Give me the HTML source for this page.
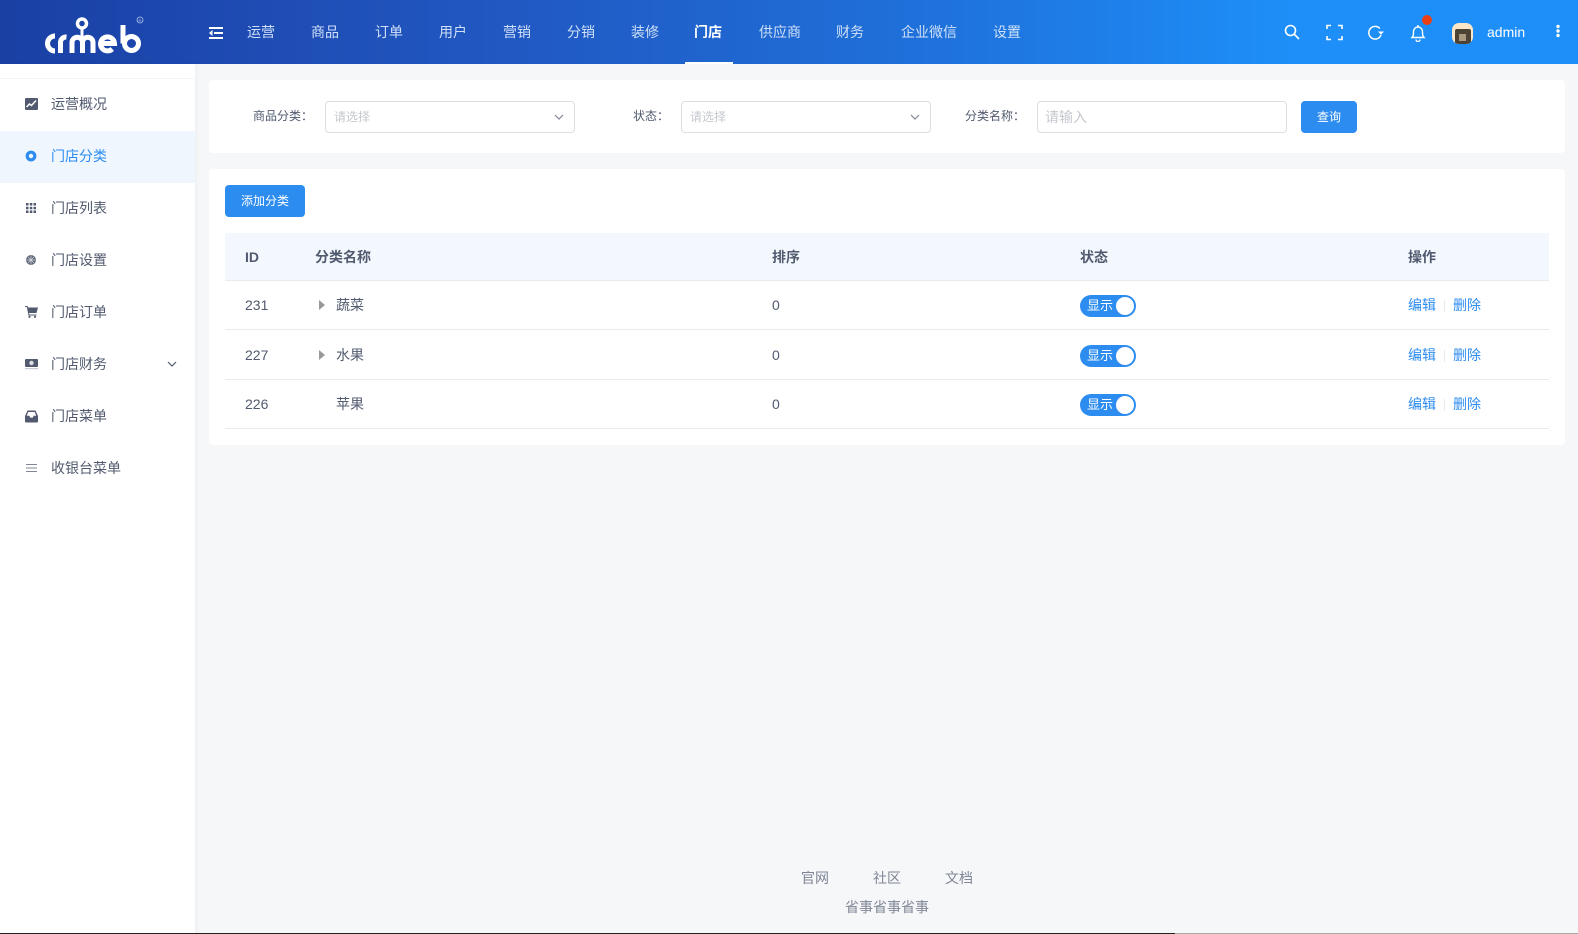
<!DOCTYPE html>
<html lang="zh-CN">
<head>
<meta charset="utf-8">
<title>门店分类</title>
<style>
html,body{margin:0;padding:0;width:1578px;height:934px;overflow:hidden;background:#f5f7f9;font-family:"Liberation Sans","Noto Sans CJK SC",sans-serif;font-size:14px;color:#515a6e}
.a{position:absolute;white-space:nowrap}
#hd{position:absolute;left:0;top:0;width:1578px;height:64px;background:linear-gradient(90deg,#1a40a4 0%,#2156c0 30%,#1f72dc 60%,#1e8ff8 82%,#1e8ff8 100%)}
.nav{position:absolute;top:18px;line-height:28px;color:#cfe0f8;font-size:14px}
#sb{position:absolute;left:0;top:64px;width:195px;height:870px;background:#fff;box-shadow:2px 0 4px rgba(0,0,0,.03)}
.mi{position:absolute;left:51px;line-height:20px;font-size:14px;color:#515a6e}
.ic{position:absolute;left:25px}
.card{position:absolute;background:#fff;border-radius:4px}
.lb{position:absolute;font-size:12px;line-height:20px;color:#515a6e}
.inp{position:absolute;top:101px;height:30px;width:248px;border:1px solid #dcdee2;border-radius:4px;background:#fff}
.ph{position:absolute;left:8px;top:5px;line-height:20px;font-size:12px;color:#c5c8ce}
.btn{position:absolute;background:#2d8cf0;color:#fff;border-radius:4px;text-align:center;font-size:12px}
.th{position:absolute;top:247px;line-height:20px;font-weight:700;font-size:14px;color:#515a6e}
.line{position:absolute;left:225px;width:1324px;height:1px;background:#e8eaec}
.td{position:absolute;line-height:20px;font-size:14px;color:#515a6e}
.sw{position:absolute;left:1080px;width:56px;height:22px;border-radius:11px;background:#2d8cf0}
.sw b{position:absolute;left:36px;top:2px;width:18px;height:18px;border-radius:50%;background:#fff}
.sw span{position:absolute;left:7px;top:1px;line-height:20px;font-size:13px;color:#fff}
.lk{position:absolute;line-height:20px;font-size:14px;color:#2d8cf0}
.dv{position:absolute;left:1444px;width:1px;height:12px;background:#e8eaec}
.tri{position:absolute;left:319px;width:0;height:0;border-left:6px solid #999;border-top:5px solid transparent;border-bottom:5px solid transparent}
.ft{position:absolute;line-height:20px;font-size:14px;color:#808695}
</style>
</head>
<body>
<div id="hd"></div>
<svg class="a" style="left:40px;top:12px" width="115" height="46" viewBox="40 12 115 46" fill="none" stroke="#fff" stroke-width="5">
<path d="M55 36A7.500 7.500 0 0 0 55 51"/>
<path d="M60.500 53V42.500a5.500 5.500 0 0 1 6-5.500"/>
<path d="M72 53V42.500a5.200 5.200 0 0 1 10.500 0V53M82.500 42.500a5.200 5.200 0 0 1 10.500 0V53"/>
<circle cx="82" cy="23.500" r="4.500" stroke-width="3.500"/>
<path d="M82 28v10" stroke-width="3"/>
<path d="M100.500 43.500h14a7 7 0 1 0-2.200 5.500"/>
<circle cx="131.500" cy="43.500" r="7"/>
<path d="M123 25v18.500"/>
<circle cx="140" cy="20" r="3" stroke="#b9c8ea" stroke-width=".8"/>
<text x="138.500" y="22" font-size="4" fill="#b9c8ea" stroke="none" font-family="Liberation Sans">R</text>
</svg>
<svg class="a" style="left:209px;top:26px" width="15" height="14" viewBox="0 0 15 14" fill="#fff"><rect x="0" y="1" width="14" height="2"/><rect x="5" y="6" width="9" height="2"/><rect x="0" y="11" width="14" height="2"/><path d="M0 7l3.500-3v6z"/></svg>
<div class="nav" style="left:247px">运营</div>
<div class="nav" style="left:311px">商品</div>
<div class="nav" style="left:375px">订单</div>
<div class="nav" style="left:439px">用户</div>
<div class="nav" style="left:503px">营销</div>
<div class="nav" style="left:567px">分销</div>
<div class="nav" style="left:631px">装修</div>
<div class="nav" style="left:694px;color:#fff;font-weight:700">门店</div>
<div class="nav" style="left:759px">供应商</div>
<div class="nav" style="left:836px">财务</div>
<div class="nav" style="left:901px">企业微信</div>
<div class="nav" style="left:993px">设置</div>
<div class="a" style="left:685px;top:62px;width:48px;height:2px;background:#fff"></div>
<svg class="a" style="left:1284px;top:24px" width="16" height="16" viewBox="0 0 16 16" fill="none" stroke="#fff" stroke-width="1.600"><circle cx="6.500" cy="6.500" r="5"/><path d="M10.200 10.200l4.300 4.300" stroke-linecap="round"/></svg>
<svg class="a" style="left:1326px;top:24px" width="17" height="17" viewBox="0 0 17 17" fill="none" stroke="#fff" stroke-width="1.600"><path d="M1 5V1.500h4M12 1.500h4V5M16 12v3.500h-4M5 15.500H1V12"/></svg>
<svg class="a" style="left:1367px;top:24px" width="18" height="17" viewBox="0 0 18 17" fill="none" stroke="#fff" stroke-width="1.500"><path d="M14 11A6.300 6.300 0 1 1 12.800 4.500"/><path d="M11 7.500h6l-3 3.200z" fill="#fff" stroke="none"/></svg>
<svg class="a" style="left:1410px;top:24px" width="16" height="18" viewBox="0 0 16 18" fill="none" stroke="#fff" stroke-width="1.400"><path d="M2 13.500c1.500-1.500 1.500-3 1.500-6a4.500 4.500 0 0 1 9 0c0 3 0 4.500 1.500 6z"/><path d="M6 15.500a2 2 0 0 0 4 0M8 1v2"/></svg>
<div class="a" style="left:1422px;top:15px;width:10px;height:10px;border-radius:50%;background:#ed3f14"></div>
<div class="a" style="left:1452px;top:23px;width:21px;height:21px;border-radius:7px;background:#fbe6c8;overflow:hidden"><div style="position:absolute;left:3px;top:6px;width:16px;height:15px;background:#4d4335;border-radius:2px 2px 0 0"></div><div style="position:absolute;left:7px;top:11px;width:7px;height:7px;background:#a89a80"></div></div>
<div class="a" style="left:1487px;top:22px;line-height:20px;font-size:14px;color:#fff">admin</div>
<svg class="a" style="left:1555px;top:24px" width="6" height="14" viewBox="0 0 6 14" fill="#fff"><circle cx="3" cy="2.500" r="1.700"/><circle cx="3" cy="7" r="1.700"/><circle cx="3" cy="11.500" r="1.700"/></svg>

<div id="sb"></div>
<div class="a" style="left:0;top:78px;width:195px;height:1px;background:#f5f5f5"></div>
<div class="a" style="left:0;top:131px;width:195px;height:52px;background:#f0f6fe"></div>
<div class="mi" style="top:94px">运营概况</div>
<div class="mi" style="top:146px;color:#2d8cf0">门店分类</div>
<div class="mi" style="top:198px">门店列表</div>
<div class="mi" style="top:250px">门店设置</div>
<div class="mi" style="top:302px">门店订单</div>
<div class="mi" style="top:354px">门店财务</div>
<div class="mi" style="top:406px">门店菜单</div>
<div class="mi" style="top:458px">收银台菜单</div>
<svg class="ic" style="top:98px" width="13" height="12" viewBox="0 0 13 12"><rect width="13" height="12" rx="1" fill="#515a6e"/><path d="M1.500 9l3-3 2 1.500L11 2.500" fill="none" stroke="#fff" stroke-width="1.500"/></svg>
<svg class="ic" style="top:150px" width="12" height="12" viewBox="0 0 12 12"><circle cx="6" cy="6" r="3.800" fill="none" stroke="#2d8cf0" stroke-width="3.200"/></svg>
<svg class="ic" style="top:202px" width="12" height="12" viewBox="0 0 12 12" fill="#515a6e"><rect x="1" y="1" width="2.500" height="2.500"/><rect x="4.800" y="1" width="2.500" height="2.500"/><rect x="8.500" y="1" width="2.500" height="2.500"/><rect x="1" y="4.800" width="2.500" height="2.500"/><rect x="4.800" y="4.800" width="2.500" height="2.500"/><rect x="8.500" y="4.800" width="2.500" height="2.500"/><rect x="1" y="8.500" width="2.500" height="2.500"/><rect x="4.800" y="8.500" width="2.500" height="2.500"/><rect x="8.500" y="8.500" width="2.500" height="2.500"/></svg>
<svg class="ic" style="top:254px" width="12" height="12" viewBox="0 0 12 12"><circle cx="6" cy="6" r="5" fill="#5f6678"/><path d="M6 1.500v9M1.500 6h9M3 3l6 6M9 3l-6 6" stroke="#d8dae0" stroke-width=".7"/></svg>
<svg class="ic" style="top:306px" width="13" height="12" viewBox="0 0 13 12" fill="#515a6e"><path d="M0 0h2.500l.6 1.500H13l-1.500 5.500H4l.4 1.500h7v1H3.500L1.800 1H0z"/><circle cx="4.500" cy="10.800" r="1.100"/><circle cx="10" cy="10.800" r="1.100"/></svg>
<svg class="ic" style="top:358px" width="13" height="12" viewBox="0 0 13 12"><rect y="1" width="13" height="8" rx="1" fill="#515a6e"/><circle cx="6.500" cy="5" r="2.200" fill="#dfe1e6"/><rect y="10" width="13" height="1.200" fill="#c8ccd4"/></svg>
<svg class="ic" style="top:410px" width="13" height="13" viewBox="0 0 13 13" fill="#515a6e"><path d="M2.500 0.500h8L13 6v5.500a1 1 0 0 1-1 1H1a1 1 0 0 1-1-1V6z"/><path d="M3.200 2h6.600l1.400 3.800H8.500a2 2 0 0 1-4 0H1.800z" fill="#fff"/></svg>
<svg class="ic" style="top:462px" width="13" height="12" viewBox="0 0 13 12" fill="#808695"><rect x="1" y="2" width="11" height="1"/><rect x="1" y="5.500" width="11" height="1"/><rect x="1" y="9" width="11" height="1"/></svg>
<svg class="a" style="left:167px;top:360px" width="10" height="8" viewBox="0 0 10 8" fill="none" stroke="#515a6e" stroke-width="1.200"><path d="M1 2l4 4 4-4"/></svg>

<div class="card" style="left:209px;top:80px;width:1356px;height:73px"></div>
<div class="lb" style="left:253px;top:106px">商品分类：</div>
<div class="inp" style="left:325px"><span class="ph">请选择</span><svg class="a" style="left:228px;top:11px" width="10" height="8" viewBox="0 0 10 8" fill="none" stroke="#808695" stroke-width="1.200"><path d="M1 2l4 4 4-4"/></svg></div>
<div class="lb" style="left:633px;top:106px">状态：</div>
<div class="inp" style="left:681px"><span class="ph">请选择</span><svg class="a" style="left:228px;top:11px" width="10" height="8" viewBox="0 0 10 8" fill="none" stroke="#808695" stroke-width="1.200"><path d="M1 2l4 4 4-4"/></svg></div>
<div class="lb" style="left:965px;top:106px">分类名称：</div>
<div class="inp" style="left:1037px"><span class="ph" style="left:7px;font-size:14px">请输入</span></div>
<div class="btn" style="left:1301px;top:101px;width:56px;height:32px;line-height:32px">查询</div>

<div class="card" style="left:209px;top:169px;width:1356px;height:276px"></div>
<div class="btn" style="left:225px;top:185px;width:80px;height:32px;line-height:32px">添加分类</div>
<div class="a" style="left:225px;top:233px;width:1324px;height:47px;background:#f3f8fe"></div>
<div class="line" style="top:280px"></div>
<div class="line" style="top:329px"></div>
<div class="line" style="top:379px"></div>
<div class="line" style="top:428px"></div>
<div class="th" style="left:245px">ID</div>
<div class="th" style="left:315px">分类名称</div>
<div class="th" style="left:772px">排序</div>
<div class="th" style="left:1080px">状态</div>
<div class="th" style="left:1408px">操作</div>

<div class="td" style="left:245px;top:295px">231</div>
<div class="tri" style="top:300px"></div>
<div class="td" style="left:336px;top:295px">蔬菜</div>
<div class="td" style="left:772px;top:295px">0</div>
<div class="sw" style="top:295px"><span>显示</span><b></b></div>
<div class="lk" style="left:1408px;top:295px">编辑</div><div class="dv" style="top:300px"></div><div class="lk" style="left:1453px;top:295px">删除</div>

<div class="td" style="left:245px;top:345px">227</div>
<div class="tri" style="top:350px"></div>
<div class="td" style="left:336px;top:345px">水果</div>
<div class="td" style="left:772px;top:345px">0</div>
<div class="sw" style="top:345px"><span>显示</span><b></b></div>
<div class="lk" style="left:1408px;top:345px">编辑</div><div class="dv" style="top:350px"></div><div class="lk" style="left:1453px;top:345px">删除</div>

<div class="td" style="left:245px;top:394px">226</div>
<div class="td" style="left:336px;top:394px">苹果</div>
<div class="td" style="left:772px;top:394px">0</div>
<div class="sw" style="top:394px"><span>显示</span><b></b></div>
<div class="lk" style="left:1408px;top:394px">编辑</div><div class="dv" style="top:399px"></div><div class="lk" style="left:1453px;top:394px">删除</div>

<div class="ft" style="left:801px;top:868px">官网</div>
<div class="ft" style="left:873px;top:868px">社区</div>
<div class="ft" style="left:945px;top:868px">文档</div>
<div class="ft" style="left:845px;top:897px">省事省事省事</div>
<div class="a" style="left:0;top:933px;width:1175px;height:1px;background:#222"></div>
<div class="a" style="left:1175px;top:933px;width:403px;height:1px;background:#aaa"></div>
</body>
</html>
